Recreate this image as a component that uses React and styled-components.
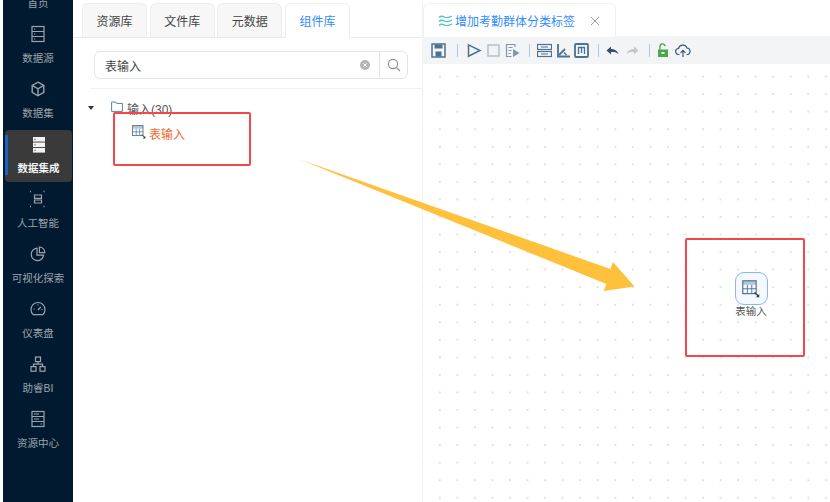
import React from 'react';
import styled, { createGlobalStyle } from 'styled-components';

const Global = createGlobalStyle`
  html, body { margin: 0; padding: 0; background: #fff; }
  body { font-family: "Liberation Sans", "Noto Sans CJK SC", sans-serif; }
  * { box-sizing: border-box; }
`;

const Page = styled.div`
  position: relative;
  display: flex;
  width: 830px;
  height: 502px;
  overflow: hidden;
  background: #fff;
`;

const Sidebar = styled.nav`
  flex: none;
  width: 70px;
  height: 502px;
  margin-left: 3px;
  background: #021a30;
  padding: 0 1px;
  display: flex;
  flex-direction: column;
  overflow: hidden;
`;

const NavList = styled.div`
  margin-top: -39px;
  display: flex;
  flex-direction: column;
`;

const NavItem = styled.div`
  position: relative;
  flex: none;
  height: 55px;
  display: flex;
  flex-direction: column;
  align-items: center;
  padding-top: ${p => (p.$active ? '6px' : '9px')};
  color: ${p => (p.$active ? '#f2f4f6' : '#9aa4ae')};
  font-size: 10.5px;
  line-height: 14px;
  ${p => p.$active && `
    height: 52px;
    margin: 4px 0 -1px 1px;
    background: #3a3a3a;
    border-radius: 4px;
    font-weight: 600;
    &::before {
      content: '';
      position: absolute;
      left: 0;
      top: 5px;
      width: 3px;
      height: 40px;
      background: #1565c0;
    }
  `}
`;

const NavIcon = styled.div`
  width: 18px;
  height: 18px;
  margin-bottom: ${p => (p.$active ? '7px' : '8px')};
  svg { display: block; }
`;

const LeftPanel = styled.section`
  flex: none;
  width: 349px;
  padding-top: 3px;
  display: flex;
  flex-direction: column;
`;

const TabRow = styled.div`
  display: flex;
  gap: 2.7px;
  height: 35px;
  padding-left: 9px;
  border-bottom: 1px solid #e8e9eb;
`;

const Tab = styled.div`
  width: 65px;
  height: ${p => (p.$active ? '35px' : '34px')};
  display: flex;
  align-items: center;
  justify-content: center;
  font-size: 12px;
  color: ${p => (p.$active ? '#2f8cff' : '#444')};
  background: ${p => (p.$active ? '#fff' : '#f7f7f7')};
  border: 1px solid #eceded;
  border-bottom: ${p => (p.$active ? '1px solid #fff' : 'none')};
  border-radius: 6px 6px 0 0;
`;

const SearchArea = styled.div`
  margin: 13px 0 0 21px;
  width: 314px;
  height: 28px;
  display: flex;
  border: 1px solid #e2e4e7;
  border-radius: 6px;
`;

const SearchInput = styled.div`
  flex: 1;
  display: flex;
  align-items: center;
  justify-content: space-between;
  padding: 0 9px 0 10px;
  font-size: 12px;
  color: #444;
`;

const SearchButton = styled.div`
  width: 28px;
  display: flex;
  align-items: center;
  justify-content: center;
  border-left: 1px solid #e2e4e7;
`;

const Divider = styled.div`
  margin: 9px 0 0 17px;
  height: 1px;
  background: #eff0f1;
`;

const Tree = styled.div`
  padding: 11px 0 0 15px;
`;

const TreeRow = styled.div`
  display: flex;
  align-items: center;
  height: 16px;
  font-size: 12px;
  color: ${p => (p.$selected ? '#f2682a' : '#555')};
  padding-left: ${p => p.$indent || 0}px;
  margin-top: ${p => p.$gap || 0}px;
`;

const Caret = styled.span`
  width: 0;
  height: 0;
  margin-right: 17px;
  border-left: 3px solid transparent;
  border-right: 3px solid transparent;
  border-top: 4px solid #333;
`;

const RowIcon = styled.span`
  display: flex;
  margin-right: ${p => p.$gap}px;
  margin-top: -3px;
`;

const RightPanel = styled.section`
  flex: 1;
  padding-top: 3px;
  display: flex;
  flex-direction: column;
  border-left: 1px solid #f1f2f3;
`;

const DocTabs = styled.div`
  height: 34px;
  border-bottom: 1px solid #f3f4f5;
`;

const DocTab = styled.div`
  width: 193px;
  height: 34px;
  padding: 0 15px 0 14px;
  display: flex;
  align-items: center;
  font-size: 12px;
  color: #2f8cff;
  background: #fff;
  border: 1px solid #eff0f1;
  border-bottom: none;
  border-radius: 6px 6px 0 0;
  svg { flex: none; }
`;

const DocTitle = styled.span`
  flex: 1;
  white-space: nowrap;
  margin-left: 1px;
`;

const Toolbar = styled.div`
  flex: none;
  height: 27px;
  padding-left: 8px;
  display: flex;
  align-items: center;
  background: #f2f4f6;
`;

const ToolIcon = styled.span`
  display: flex;
  margin-right: ${p => p.$gap ?? 6}px;
`;

const ToolSep = styled.span`
  width: 1px;
  height: 13px;
  background: #a9cbe6;
  margin: 0 ${p => p.$after ?? 7}px 0 ${p => p.$before ?? 5}px;
`;

const Canvas = styled.div`
  position: relative;
  flex: 1;
  background-color: #fff;
  background-image: radial-gradient(circle, #cfd1d4 0.6px, transparent 0.85px);
  background-size: 17.55px 17.55px;
  background-position: -9.5px 3.8px;
`;

const FlowNode = styled.div`
  position: absolute;
  left: 303px;
  top: 208px;
  width: 50px;
  display: flex;
  flex-direction: column;
  align-items: center;
  font-size: 10.5px;
  line-height: 13px;
  color: #555;
`;

const NodeBox = styled.div`
  width: 33px;
  height: 33px;
  display: flex;
  align-items: center;
  justify-content: center;
  background: #f4f8ff;
  border: 1px solid #8db4f5;
  border-radius: 9px;
`;

const RedFrame = styled.div`
  position: absolute;
  left: ${p => p.$x}px;
  top: ${p => p.$y}px;
  width: ${p => p.$w}px;
  height: ${p => p.$h}px;
  border: 2px solid #f4474b;
  border-radius: 2px;
  pointer-events: none;
`;

const Arrow = styled.svg`
  position: absolute;
  left: 0;
  top: 0;
  pointer-events: none;
`;

const NavGlyph = ({ children, color = '#9aa4ae', fill = 'none' }) => (
  <svg width="18" height="18" viewBox="0 0 18 18" fill={fill} stroke={color} strokeWidth="1.2">{children}</svg>
);

const navItems = [
  { label: '首页', icon: <NavGlyph><path d="M3 8l6-5 6 5v7H3z" /></NavGlyph> },
  {
    label: '数据源',
    icon: <NavGlyph><rect x="3" y="1.500" width="12" height="15" /><path d="M3 6.500h12M3 11.500h12M5 4h1.200M5 9h1.200M5 14h1.200" /></NavGlyph>,
  },
  {
    label: '数据集',
    icon: <NavGlyph><path d="M9 2.200l5.800 3.200v7L9 15.800l-5.800-3.400v-7z" strokeWidth="1.400" /><path d="M3.600 5.600L9 8.800l5.400-3.200M9 8.800v6.600" strokeWidth="1.400" /></NavGlyph>,
  },
  {
    label: '数据集成',
    active: true,
    icon: (
      <svg width="18" height="18" viewBox="0 0 18 18">
        <rect x="3" y="1" width="12" height="4.600" fill="#f2f2f2" />
        <rect x="3" y="6.500" width="12" height="4.600" fill="#f2f2f2" />
        <rect x="3" y="12" width="12" height="4.600" fill="#f2f2f2" />
        <path d="M4.500 3.300h1.200M4.500 8.800h1.200M4.500 14.300h1.200" stroke="#3a3a3a" strokeWidth="1" />
      </svg>
    ),
  },
  {
    label: '人工智能',
    icon: <NavGlyph><path d="M1 1.500h2.500M14.500 1.500H17M1 16.500h2.500M14.500 16.500H17" strokeWidth="1.400" strokeDasharray="1 1.500" /><path d="M5.500 5h7v3.300h-7zM5.500 10h7v3h-7z" /></NavGlyph>,
  },
  {
    label: '可视化探索',
    icon: <NavGlyph><path d="M8 3.200a6.200 6.200 0 1 0 6.600 7H8z" /><path d="M10.400 2a5.800 5.800 0 0 1 5.400 5.600h-5.400z" /></NavGlyph>,
  },
  {
    label: '仪表盘',
    icon: <NavGlyph><path d="M4.200 14.600a7 7 0 1 1 9.600 0z" /><path d="M9 10l2.800-3M4.600 9h1M12.600 9.600h1M9 4.400v1" /></NavGlyph>,
  },
  {
    label: '助睿BI',
    icon: <NavGlyph><rect x="6.500" y="2" width="5" height="4.600" /><rect x="2" y="11.600" width="5" height="4.600" /><rect x="11" y="11.600" width="5" height="4.600" /><path d="M9 6.600v2.600M4.500 11.600V9.200h9v2.400" /></NavGlyph>,
  },
  {
    label: '资源中心',
    icon: <NavGlyph><rect x="3" y="1.500" width="12" height="15" /><path d="M3 6.500h12M3 11.500h12M5 4h5M5 9h5M11.500 14h1.500" /></NavGlyph>,
  },
];

const TableGlyph = ({ size = 14, color = '#50708f' }) => (
  <svg width={size} height={size} viewBox="0 0 14 14" fill="none">
    <path d="M0.600 2.200H11" stroke="#b4c6d8" strokeWidth="3" />
    <rect x="0.600" y="0.600" width="10.400" height="10" stroke={color} strokeWidth="0.900" />
    <path d="M0.600 6.800h10.400M4.200 3.800v6.800M7.600 3.800v6.800" stroke={color} strokeWidth="0.700" />
    <path d="M9.800 9.600l2.600 2.600" stroke="#24384c" strokeWidth="1" />
    <path d="M13.400 10.800v2.600h-2.600z" fill="#24384c" />
  </svg>
);

const ToolSvg = ({ w = 15, children }) => (
  <svg width={w} height="15" viewBox={`0 0 ${w} 15`} fill="none" stroke="#4d7190" strokeWidth="1.500">{children}</svg>
);

const App = () => (
  <Page>
    <Global />
    <Sidebar>
      <NavList>
        {navItems.map(item => (
          <NavItem key={item.label} $active={item.active}>
            <NavIcon $active={item.active}>{item.icon}</NavIcon>
            {item.label}
          </NavItem>
        ))}
      </NavList>
    </Sidebar>

    <LeftPanel>
      <TabRow>
        <Tab>资源库</Tab>
        <Tab>文件库</Tab>
        <Tab>元数据</Tab>
        <Tab $active>组件库</Tab>
      </TabRow>
      <SearchArea>
        <SearchInput>
          表输入
          <svg width="10" height="10" viewBox="0 0 10 10">
            <circle cx="5" cy="5" r="5" fill="#b5b5b5" />
            <path d="M3.300 3.300l3.400 3.400M6.700 3.300L3.300 6.700" stroke="#fff" strokeWidth="1" />
          </svg>
        </SearchInput>
        <SearchButton>
          <svg width="14" height="14" viewBox="0 0 14 14" fill="none" stroke="#8a8a8a" strokeWidth="1.100">
            <circle cx="6" cy="6" r="4.600" />
            <path d="M9.400 9.400l3.600 3.600" />
          </svg>
        </SearchButton>
      </SearchArea>
      <Divider />
      <Tree>
        <TreeRow>
          <Caret />
          <RowIcon $gap={4}>
            <svg width="12" height="11" viewBox="0 0 12 11" fill="none" stroke="#50708f" strokeWidth="0.900">
              <path d="M0.600 1h4l1 1.400h5.800v8H0.600z" />
            </svg>
          </RowIcon>
          输入(30)
        </TreeRow>
        <TreeRow $selected $indent={44} $gap={9}>
          <RowIcon $gap={3}><TableGlyph /></RowIcon>
          表输入
        </TreeRow>
      </Tree>
    </LeftPanel>

    <RightPanel>
      <DocTabs>
        <DocTab>
          <svg width="16" height="12" viewBox="0 0 16 12" fill="none" stroke="#55c3bd" strokeWidth="1.300">
            <path d="M1 2.500c2-2 3.500-1.500 5.500-.5s4 1 7.500-1M1 6.500c2-2 3.500-1.500 5.500-.5s4 1 7.500-1M1 10.500c2-2 3.500-1.500 5.500-.5s4 1 7.500-1" />
          </svg>
          <DocTitle>增加考勤群体分类标签</DocTitle>
          <svg width="10" height="10" viewBox="0 0 10 10" stroke="#999" strokeWidth="1">
            <path d="M1 1l8 8M9 1l-8 8" />
          </svg>
        </DocTab>
      </DocTabs>
      <Toolbar>
        <ToolIcon $gap={5}>
          <ToolSvg>
            <rect x="1" y="1" width="13" height="13" />
            <rect x="3.500" y="1.500" width="8" height="4" fill="#4d7190" stroke="none" />
            <rect x="4.500" y="8.500" width="6" height="5" fill="#4d7190" stroke="none" />
          </ToolSvg>
        </ToolIcon>
        <ToolSep $before={6} $after={9} />
        <ToolIcon $gap={5}><ToolSvg><path d="M1.500 1.800L13 7.500 1.500 13.200z" /></ToolSvg></ToolIcon>
        <ToolIcon $gap={5}>
          <svg width="13" height="15" viewBox="0 0 13 15" fill="none" stroke="#a9b8c5" strokeWidth="1.300"><rect x="1" y="2" width="11" height="11" /></svg>
        </ToolIcon>
        <ToolIcon $gap={3}>
          <ToolSvg>
            <path d="M10 4V1.500H1.500v12h5" strokeWidth="1.200" stroke="#7f98ad" />
            <path d="M3.500 4.500h4M3.500 7.500h3M3.500 10.500h2" strokeWidth="1" stroke="#7f98ad" />
            <path d="M8 6l6.500 4L8 14z" fill="#7f98ad" stroke="none" />
          </ToolSvg>
        </ToolIcon>
        <ToolSep $before={6} $after={7} />
        <ToolIcon $gap={4}>
          <ToolSvg>
            <rect x="0.500" y="1.500" width="14" height="5" strokeWidth="1.200" />
            <rect x="0.500" y="8.500" width="14" height="5" strokeWidth="1.200" />
            <path d="M4 4h7M4 11h7" strokeWidth="1" />
          </ToolSvg>
        </ToolIcon>
        <ToolIcon $gap={3}>
          <ToolSvg>
            <path d="M2 1v12.500h12" strokeWidth="1.800" />
            <path d="M3 12l6-6" strokeWidth="1.800" />
            <path d="M8 9.500l2.500 2.500" strokeWidth="1.500" />
          </ToolSvg>
        </ToolIcon>
        <ToolIcon $gap={0}>
          <ToolSvg>
            <rect x="1" y="1" width="13" height="13" rx="1" strokeWidth="1.800" />
            <path d="M4.500 11V4.500h6V11M7.500 4.500V10" strokeWidth="1.300" />
          </ToolSvg>
        </ToolIcon>
        <ToolSep $before={9} $after={7} />
        <ToolIcon $gap={7}>
          <svg width="13" height="15" viewBox="0 0 13 15">
            <path d="M0.500 7.500L5 3.500v2.500c4 0 6.500 2 7.500 5-2-1.800-4-2.300-7.500-2v2.500z" fill="#33516c" />
          </svg>
        </ToolIcon>
        <ToolIcon $gap={0}>
          <svg width="13" height="15" viewBox="0 0 13 15">
            <path d="M12.500 7.500L8 3.500v2.500c-4 0-6.500 2-7.500 5 2-1.800 4-2.300 7.500-2v2.500z" fill="#c3c8cd" />
          </svg>
        </ToolIcon>
        <ToolSep $before={10} $after={7} />
        <ToolIcon $gap={6}>
          <svg width="12" height="15" viewBox="0 0 12 15" fill="none">
            <path d="M3 6.500V3.500a2.500 2.500 0 0 1 5-.2" stroke="#4ca64c" strokeWidth="1.400" />
            <rect x="1" y="6.500" width="10" height="7.500" fill="#4ca64c" />
            <rect x="4.500" y="9" width="3" height="2" fill="#e8f4e8" />
          </svg>
        </ToolIcon>
        <ToolIcon $gap={0}>
          <ToolSvg w={16}>
            <path d="M4.500 11.500H3.800a3 3 0 0 1-.3-6A4.500 4.500 0 0 1 12 5a3.300 3.300 0 0 1 .5 6.500h-1" strokeWidth="1.200" stroke="#3d5a75" />
            <path d="M8 14V7.500M5.500 9.800L8 7.300l2.500 2.500" strokeWidth="1.200" stroke="#3d5a75" />
          </ToolSvg>
        </ToolIcon>
      </Toolbar>
      <Canvas>
        <FlowNode>
          <NodeBox><TableGlyph size={18} /></NodeBox>
          表输入
        </FlowNode>
      </Canvas>
    </RightPanel>

    <Arrow width="830" height="502" viewBox="0 0 830 502">
      <path d="M300 159.500L610.500 269 613 262 634.500 286.500 603.500 291 606.500 284z" fill="#ffc03c" />
    </Arrow>
    <RedFrame $x={113} $y={112} $w={138} $h={54} />
    <RedFrame $x={685} $y={238} $w={120} $h={119} />
  </Page>
);

export default App;
